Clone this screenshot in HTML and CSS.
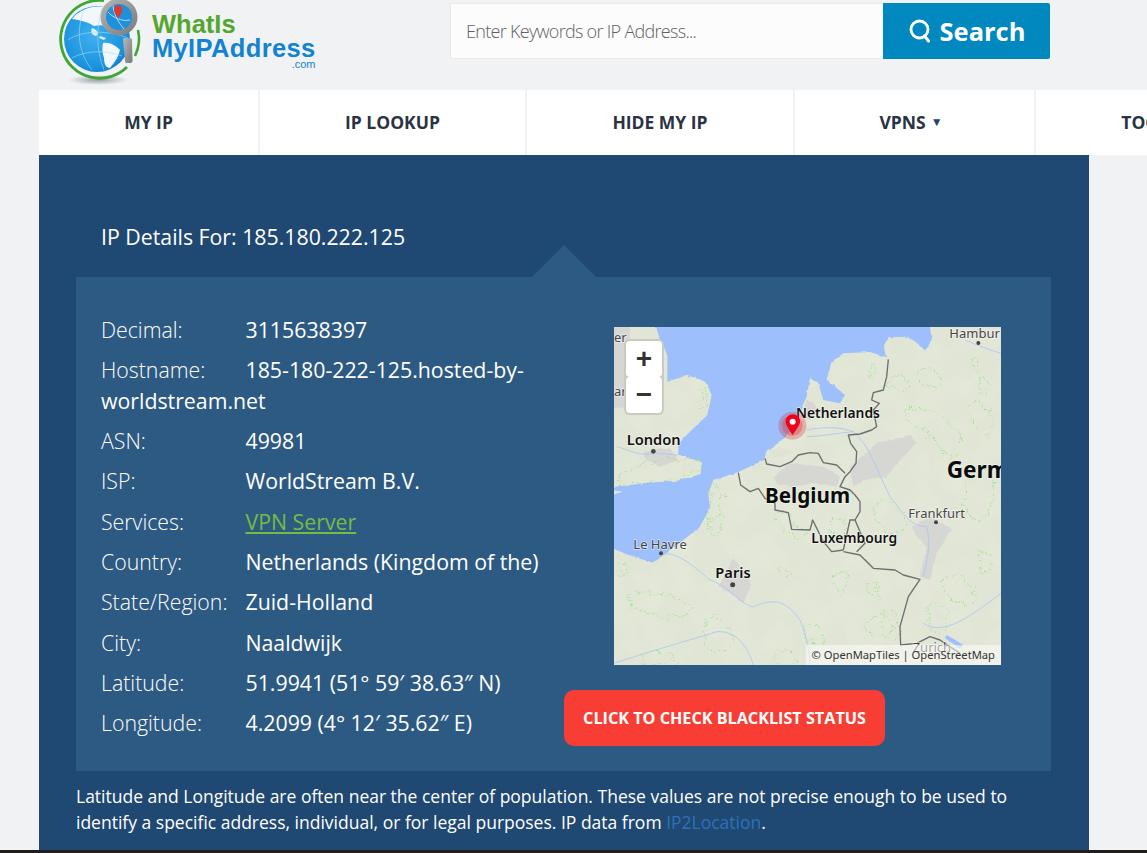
FILE: index.html
```html
<!DOCTYPE html>
<html lang="en">
<head>
    <meta charset="UTF-8">
    <meta name="viewport" content="width=device-width, initial-scale=1.0">
    <title>IP Details</title>
    <link rel="stylesheet" href="styles.css">
</head>
<body>
    <div class="page">
        <!-- Logo and search -->
        <header class="header">
            <a href="#" class="logo">
                <svg class="logo-mark" viewBox="0 0 90 90" width="90" height="90" aria-hidden="true">
                    <defs>
                        <radialGradient id="globe" cx="0.45" cy="0.45" r="0.65">
                            <stop offset="0" stop-color="#3fb0ee"/>
                            <stop offset="0.75" stop-color="#1a92de"/>
                            <stop offset="1" stop-color="#0d70c2"/>
                        </radialGradient>
                        <radialGradient id="shadow">
                            <stop offset="0" stop-color="#80858a" stop-opacity="0.75"/>
                            <stop offset="1" stop-color="#80858a" stop-opacity="0"/>
                        </radialGradient>
                        <linearGradient id="steel" x1="0" y1="0" x2="1" y2="1">
                            <stop offset="0" stop-color="#b5b7b8"/>
                            <stop offset="1" stop-color="#77797b"/>
                        </linearGradient>
                    </defs>
                    <ellipse cx="40" cy="80" rx="30" ry="5" fill="url(#shadow)"/>
                    <path d="M46 0.5 A39 39 0 1 0 69 67" fill="none" stroke="#3fa535" stroke-width="2.8"/>
                    <path d="M80 30 A39 39 0 0 1 77 56" fill="none" stroke="#3fa535" stroke-width="2.6"/>
                    <circle cx="39" cy="39" r="33" fill="url(#globe)"/>
                    <path d="M14 19 C24 6 44 3 56 11 L56 27 C48 26 44 24 36 26 C30 22 22 20 14 19Z" fill="#f1f7fb"/>
                    <path d="M45 43 C52 42 58 46 62 50 C60 58 56 63 52 68 C48 68 46 64 46 58 C44 52 44 48 45 43Z" fill="#f1f7fb"/>
                    <path d="M34 28 C40 30 42 34 38 36 C34 35 32 32 34 28Z M42 36 L48 38 L46 40 L41 38Z" fill="#d8eef9"/>
                    <path d="M10 40 C24 30 50 30 70 38 M14 58 C28 50 50 50 64 56 M26 10 C18 30 20 52 34 70 M44 8 C38 28 38 50 46 70" fill="none" stroke="#a7dcf6" stroke-width="0.6"/>
                    <circle cx="61" cy="17" r="18.5" fill="url(#steel)"/>
                    <circle cx="61" cy="17" r="13" fill="#1f90dc"/>
                    <path d="M50 12 C54 17 64 22 72 20 M55 6 C56 14 60 22 66 29" fill="none" stroke="#d4ecfa" stroke-width="0.8"/>
                    <path d="M60 18.5 C57 13.5 56 11.5 56 9.5 A4.2 4.2 0 0 1 64.4 9.5 C64.4 11.5 63 13.5 60 18.5Z" fill="#dc3a2c"/>
                    <path d="M66 38 L72 38 C73.5 38 74 39 74 40 L74.5 61 C74.5 62.5 73 63 72 63 L69 63 C67.5 63 67 62 67 61 L65 40 C65 39 65 38 66 38Z" fill="url(#steel)"/>
                </svg>
                <span class="logo-text">
                    <span class="logo-green">WhatIs</span>
                    <span class="logo-blue">MyIPAddress</span>
                    <span class="logo-com">.com</span>
                </span>
            </a>
            <form class="search" action="#">
                <input type="text" class="search-input" placeholder="Enter Keywords or IP Address...">
                <button type="button" class="search-button">
                    <svg viewBox="0 0 24 24" width="24" height="24" aria-hidden="true">
                        <circle cx="11.5" cy="10.5" r="8.5" fill="none" stroke="#fff" stroke-width="2.8"/>
                        <path d="M16.5 17 L20.5 22" stroke="#fff" stroke-width="3" stroke-linecap="round"/>
                    </svg>
                    Search
                </button>
            </form>
        </header>

        <!-- Main nav -->
        <nav class="nav">
            <a href="#" class="tab tab-first">MY IP</a>
            <a href="#" class="tab tab-wide">IP LOOKUP</a>
            <a href="#" class="tab">HIDE MY IP</a>
            <a href="#" class="tab tab-short">VPNS <span class="caret">▼</span></a>
            <a href="#" class="tab tab-tools">TOOLS <span class="caret">▼</span></a>
        </nav>

        <!-- IP details -->
        <main class="panel">
            <h2 class="panel-title">IP Details For: 185.180.222.125</h2>
            <section class="details">
                <div class="info">
                    <p><span class="label">Decimal:</span>3115638397</p>
                    <p><span class="label">Hostname:</span>185-180-222-125.hosted-by-worldstream.net</p>
                    <p><span class="label">ASN:</span>49981</p>
                    <p><span class="label">ISP:</span>WorldStream B.V.</p>
                    <p><span class="label">Services:</span><a href="#" class="vpn-link">VPN Server</a></p>
                    <p><span class="label">Country:</span>Netherlands (Kingdom of the)</p>
                    <p><span class="label">State/Region:</span>Zuid-Holland</p>
                    <p><span class="label">City:</span>Naaldwijk</p>
                    <p><span class="label">Latitude:</span>51.9941 (51° 59′ 38.63″ N)</p>
                    <p><span class="label">Longitude:</span>4.2099 (4° 12′ 35.62″ E)</p>
                </div>
                <div class="side">
                    <div class="map">
                        <!-- viewBox is 3x the map's pixel size -->
                        <svg class="map-svg" viewBox="12 21 1161 1014" width="387" height="338" aria-hidden="true">
                            <defs>
                                <filter id="mottle" filterUnits="userSpaceOnUse" x="12" y="21" width="1161" height="1014">
                                    <feTurbulence type="fractalNoise" baseFrequency="0.012" numOctaves="3" seed="4"/>
                                    <feColorMatrix type="matrix" values="0 0 0 0 0.80  0 0 0 0 0.87  0 0 0 0 0.74  1.6 0 0 0 -0.62"/>
                                </filter>
                                <filter id="coast" filterUnits="userSpaceOnUse" x="-40" y="-40" width="1260" height="1120">
                                    <feTurbulence type="fractalNoise" baseFrequency="0.05" numOctaves="2" seed="7"/>
                                    <feDisplacementMap in="SourceGraphic" scale="9" xChannelSelector="R" yChannelSelector="G"/>
                                </filter>
                                <filter id="wiggle" filterUnits="userSpaceOnUse" x="12" y="21" width="1161" height="1014">
                                    <feTurbulence type="fractalNoise" baseFrequency="0.035" numOctaves="3" seed="11"/>
                                    <feDisplacementMap in="SourceGraphic" scale="38" xChannelSelector="R" yChannelSelector="G"/>
                                </filter>
                            </defs>
                            <rect x="12" y="21" width="1161" height="1014" fill="#e1e5d5"/>
                            <rect x="12" y="21" width="1161" height="1014" filter="url(#mottle)" opacity="0.5"/>
                            <!-- sea -->
                            <path class="sea" filter="url(#coast)" d="M135 -20 L960 -20 L960 21 L965 60 L945 92 L925 70 L890 50 L835 52 L822 80 L828 112 L780 96 L700 100 L665 125 L650 180 L705 225 L690 250 L640 240 L625 190 L600 175 L590 230 L565 285 L535 340 L510 365 L470 392 L462 420 L385 456 L310 480 L295 520 L300 565 L268 622 L195 680 L130 728 L70 710 L-20 675 L-20 535 L35 515 L-20 505 L100 490 L200 482 L272 462 L275 425 L205 405 L205 372 L240 335 L292 285 L305 225 L285 185 L232 165 L172 185 L172 110 L155 60 L135 21Z"/>
                            <path class="land" d="M480 392 C510 380 540 385 550 395 L520 410 L478 410Z"/>
                            <!-- urban -->
                            <g filter="url(#coast)">
                                <path class="urban" d="M-20 -20 L60 -20 L60 80 L50 200 L50 260 L-20 270Z"/>
                                <path class="urban" d="M490 470 L540 430 L640 440 L690 470 L680 500 L610 490 L540 500 L500 490Z"/>
                                <path class="urban" d="M720 440 L800 370 L900 345 L920 370 L870 420 L830 470 L760 480 L730 500Z"/>
                                <path class="urban" d="M905 620 L960 590 L1025 625 L1010 650 L980 700 L960 780 L930 770 L950 680 L920 650Z"/>
                                <path class="urban" d="M325 800 L370 715 L425 790 L400 850 L370 825Z"/>
                                <path class="urban" d="M100 395 L180 385 L205 420 L150 440 L110 420Z"/>
                                <path class="urban" d="M590 240 L620 260 L600 300 L575 290Z"/>
                            </g>
                            <!-- forest outlines -->
                            <g class="forest" filter="url(#wiggle)">
                                <path d="M920 150 C960 130 1000 170 995 195 C950 210 920 190 920 150Z"/>
                                <path d="M880 270 C940 240 1020 300 1050 350 C1040 420 1010 430 990 380 C960 330 900 320 880 270Z"/>
                                <path d="M1090 120 C1110 110 1115 150 1090 160Z"/>
                                <path d="M1105 175 C1140 170 1145 205 1110 215Z"/>
                                <path d="M780 130 C800 140 800 180 780 180Z"/>
                                <path d="M830 200 C860 150 880 150 895 210Z"/>
                                <path d="M20 470 C80 420 170 410 270 425 C270 470 180 480 100 490 C70 500 30 500 20 470Z"/>
                                <path d="M272 200 C300 200 305 250 280 270Z"/>
                                <path d="M300 490 C340 490 350 560 320 590 C300 620 285 600 300 560Z"/>
                                <path d="M490 570 C540 570 550 620 600 640 C570 670 510 640 490 570Z"/>
                                <path d="M660 600 C700 580 720 620 700 660 C670 660 650 630 660 600Z"/>
                                <path d="M50 820 C110 810 240 830 250 870 C220 900 130 900 60 850Z"/>
                                <path d="M500 740 C530 730 550 750 530 770 C510 770 500 760 500 740Z"/>
                                <path d="M670 760 C720 740 730 790 690 820 C670 810 670 790 670 760Z"/>
                                <path d="M770 790 C800 780 820 810 800 840 C780 830 770 810 770 790Z"/>
                                <path d="M760 920 C790 870 830 880 850 920 C830 970 790 960 760 920Z"/>
                                <path d="M580 920 C620 900 650 930 640 980 C600 980 580 950 580 920Z"/>
                                <path d="M290 890 C340 880 350 900 360 940 C400 970 330 1020 280 980Z"/>
                                <path d="M1000 780 C1060 740 1100 790 1090 850 C1040 860 990 830 1000 780Z"/>
                                <path d="M960 850 C1000 840 1040 900 1000 940 C960 930 940 900 960 850Z"/>
                                <path d="M1060 520 C1090 420 1150 420 1160 500 C1140 620 1070 640 1060 520Z"/>
                                <path d="M790 560 C830 520 880 560 890 610 C860 660 790 640 790 560Z"/>
                                <path d="M1100 700 C1150 680 1160 740 1120 760Z"/>
                                <path d="M100 1000 C150 980 200 1010 210 1035 L100 1035Z"/>
                                <path d="M500 990 C530 980 560 1000 560 1035 L500 1035Z"/>
                                <path d="M30 730 C50 720 60 750 30 770Z"/>
                                <path d="M1080 250 C1120 240 1160 280 1150 340 C1110 350 1070 300 1080 250Z"/>
                                <path d="M820 880 C860 860 880 900 860 960 C830 960 810 920 820 880Z"/>
                                <path d="M300 590 C340 580 350 620 320 640 C300 640 290 620 300 590Z"/>
                            </g>
                            <!-- rivers -->
                            <g class="river">
                                <path d="M590 330 C640 320 690 320 730 335 C780 380 790 430 840 530 C880 580 900 620 950 620 C965 680 950 720 940 770"/>
                                <path d="M590 350 C620 350 680 340 730 335"/>
                                <path d="M20 380 C60 390 90 410 130 400 C160 400 190 405 205 405"/>
                                <path d="M150 700 C210 700 240 730 300 780 C360 800 400 860 430 860 C480 840 520 830 570 900 C590 950 600 1000 600 1035"/>
                                <path d="M12 1030 C100 1000 240 960 320 935 C390 930 420 1000 430 1035"/>
                                <path d="M1065 60 C1100 75 1140 90 1173 100"/>
                                <path d="M940 910 C1000 950 1080 890 1173 820"/>
                            </g>
                            <path class="lake" d="M1010 945 L1060 975 L1050 985 L1005 955Z"/>
                            <!-- borders -->
                            <g class="border">
                                <path d="M835 118 L830 170 L820 210 L790 218 L785 240 L808 250 L790 270 L800 320 L785 330 L750 342 L715 345 L722 370 L740 395 L738 430 L720 455 L705 470 L690 500 L720 510 L735 525 L750 545 L750 575 L735 600 L720 600 L700 690"/>
                                <path d="M465 415 L470 432 L510 440 L545 425 L565 405 L600 398 L625 400 L640 428 L680 435 L705 460"/>
                                <path d="M385 458 L392 495 L420 515 L445 505 L465 535 L495 550 L495 570 L535 578 L545 628 L600 630 L608 600 L640 665 L665 695 L700 690"/>
                                <path d="M735 600 L765 670 L740 695"/>
                                <path d="M700 695 L750 705 L790 745 L855 750 L880 765 L930 778 L895 830 L870 920 L872 975"/>
                                <path d="M870 975 L920 970 L960 950 L990 960 L1050 1000"/>
                            </g>
                            <!-- city dots -->
                            <g class="dot">
                                <circle cx="130" cy="394" r="7"/>
                                <circle cx="153" cy="700" r="6"/>
                                <circle cx="368" cy="794" r="7.5"/>
                                <circle cx="978" cy="607" r="6"/>
                                <circle cx="1105" cy="69" r="6"/>
                            </g>
                            <!-- labels -->
                            <text class="city" x="1018" y="55">Hambur</text>
                            <text class="city" x="12" y="67">er</text>
                            <text class="city" x="12" y="227">ar</text>
                            <text class="place" x="558" y="294">Netherlands</text>
                            <text class="place place-lg" x="50" y="375">London</text>
                            <text class="country" x="1010" y="474">Germ</text>
                            <text class="country country-be" x="465" y="549">Belgium</text>
                            <text class="city" x="895" y="593">Frankfurt</text>
                            <text class="place" x="604" y="668">Luxembourg</text>
                            <text class="city" x="70" y="686">Le Havre</text>
                            <text class="place place-lg" x="316" y="774">Paris</text>
                            <text class="city" x="908" y="995">Zurich</text>
                            <!-- marker -->
                            <circle cx="547" cy="317" r="42" fill="#d8282e" opacity="0.28"/>
                            <circle cx="547" cy="317" r="31" fill="#d8282e" opacity="0.3"/>
                            <path d="M548 345 C532 322 527 314 527 304 A21 21 0 0 1 570 304 C570 314 564 322 548 345Z" fill="#f0001a"/>
                            <circle cx="548" cy="305" r="9" fill="#fff"/>
                        </svg>
                        <div class="zoom">
                            <span class="zoom-btn">+</span>
                            <span class="zoom-btn">−</span>
                        </div>
                        <div class="attribution">© OpenMapTiles | OpenStreetMap</div>
                    </div>
                    <a href="#" class="blacklist">CLICK TO CHECK BLACKLIST STATUS</a>
                </div>
            </section>
            <p class="note">Latitude and Longitude are often near the center of population. These values are not precise enough to be used to identify a specific address, individual, or for legal purposes. IP data from <a href="#">IP2Location</a>.</p>
        </main>
        <div class="footer-strip"></div>
    </div>
</body>
</html>
```

FILE: styles.css
```css
/* Basic page */
html, body {
    height: 100%;
}

body {
    font-family: "Open Sans", sans-serif;
    background-color: #f1f2f4;
    color: #fff;
    margin: 0;
    overflow: hidden;
}

.page {
    width: 1147px;
    overflow: hidden;
}

/* Header */
.header {
    display: flex;
    height: 90px;
}

.logo {
    display: flex;
    width: 392px;
    margin-left: 58px;
    text-decoration: none;
}

.logo-mark {
    flex: none;
}

.logo-text {
    display: flex;
    flex-direction: column;
    margin-left: 4px;
    padding-top: 12px;
    font-family: "Liberation Sans", Arial, sans-serif;
    font-weight: 700;
}

.logo-green {
    color: #55a630;
    font-size: 25.5px;
    line-height: 24px;
}

.logo-blue {
    color: #1283d0;
    font-size: 25.5px;
    letter-spacing: 0.35px;
    line-height: 24px;
}

.logo-com {
    align-self: flex-end;
    color: #1283d0;
    font-size: 11px;
    font-weight: 400;
    line-height: 9px;
}

.search {
    display: flex;
    align-items: flex-start;
    margin-top: 3px;
}

.search-input {
    box-sizing: border-box;
    width: 433px;
    height: 56px;
    padding: 0 15px;
    border: 1px solid #e9eaec;
    border-right: none;
    background-color: #fcfcfc;
    font-family: "Open Sans", sans-serif;
    font-size: 18px;
    font-weight: 300;
    letter-spacing: -0.7px;
    outline: none;
}

.search-input::placeholder {
    color: #5f6164;
    opacity: 1;
}

.search-button {
    display: flex;
    align-items: center;
    justify-content: center;
    gap: 8px;
    width: 167px;
    height: 56px;
    padding: 0;
    border: none;
    border-radius: 0 2px 2px 0;
    background-color: #0088bf;
    color: #fff;
    font-family: "Open Sans", sans-serif;
    font-size: 25.5px;
    font-weight: 700;
}

/* Nav */
.nav {
    display: flex;
    gap: 2px;
    height: 65px;
    margin-left: 39px;
}

.tab {
    flex: none;
    display: flex;
    align-items: center;
    justify-content: center;
    box-sizing: border-box;
    width: 266px;
    padding-bottom: 2px;
    background-color: #fff;
    color: #2a3342;
    font-size: 17.5px;
    font-weight: 700;
    text-decoration: none;
}

.tab-first {
    width: 219px;
}

.tab-wide {
    width: 265px;
}

.tab-short {
    width: 239px;
}

.tab-tools {
    width: 252px;
}

.caret {
    margin-left: 5px;
    margin-right: 7px;
    font-size: 12px;
    color: #1f4872;
}

/* IP details panel */
.panel {
    width: 1050px;
    height: 695px;
    margin-left: 39px;
    box-sizing: border-box;
    padding: 0 38px 0 37px;
    background-color: #1f4872;
}

.panel-title {
    margin: 0;
    padding: 66px 0 25px 25px;
    font-size: 21.3px;
    font-weight: 400;
    line-height: 31px;
}

.details {
    position: relative;
    display: flex;
    height: 494px;
    box-sizing: border-box;
    padding: 38px 0 0 25px;
    background-color: #2d5a82;
}

/* little arrow on top of the box */
.details::before {
    content: "";
    position: absolute;
    top: -32px;
    left: 456px;
    border-left: 32px solid transparent;
    border-right: 32px solid transparent;
    border-bottom: 32px solid #2d5a82;
}

.info {
    flex: none;
    width: 463px;
}

.info p {
    margin: 0 0 10px;
    font-size: 21.3px;
    line-height: 30.35px;
}

.label {
    display: inline-block;
    width: 144.5px;
    font-weight: 300;
}

.vpn-link {
    color: #76bc43;
}

.side {
    display: flex;
    flex-direction: column;
    align-items: flex-start;
    padding-top: 12px;
}

/* Map */
.map {
    position: relative;
    width: 387px;
    height: 338px;
    margin-left: 50px;
    overflow: hidden;
}

.map-svg {
    display: block;
}

.sea {
    fill: #9dbffc;
}

.land {
    fill: #dfe3d3;
}

.urban {
    fill: #d6d6d3;
}

.forest path {
    fill: none;
    stroke: #93e385;
    stroke-width: 3.5;
    stroke-dasharray: 3 6;
}

.river path {
    fill: none;
    stroke: #a9c8f5;
    stroke-width: 2.5;
}

.lake {
    fill: #9dbffc;
}

.border path {
    fill: none;
    stroke: #6b6e6e;
    stroke-width: 4;
    stroke-linejoin: round;
}

.dot circle {
    fill: #444;
}

.map-svg text {
    font-family: "Noto Sans", "Open Sans", sans-serif;
    paint-order: stroke;
    stroke: rgba(255, 255, 255, 0.6);
    stroke-width: 4;
}

.city {
    fill: #444;
    font-size: 39px;
}

.place {
    fill: #111;
    font-size: 41.5px;
    font-weight: 600;
}

.place-lg {
    font-size: 44px;
}

.country {
    fill: #0c0c0c;
    font-size: 68px;
    font-weight: 700;
}

.country-be {
    font-size: 62px;
}

.zoom {
    position: absolute;
    top: 12px;
    left: 10px;
    display: flex;
    flex-direction: column;
    padding: 2px;
    border-radius: 6px;
    background-color: #c9cbbf;
}

.zoom-btn {
    display: flex;
    align-items: center;
    justify-content: center;
    width: 36px;
    height: 36px;
    border-radius: 4px;
    background-color: #fff;
    color: #333;
    font-family: "Liberation Sans", Arial, sans-serif;
    font-size: 28px;
    font-weight: 700;
}

.attribution {
    position: absolute;
    right: 0;
    bottom: 0;
    padding: 0 6px;
    background-color: rgba(255, 255, 255, 0.5);
    color: #333;
    font-family: "Noto Sans", sans-serif;
    font-size: 11.2px;
    line-height: 20px;
}

.blacklist {
    display: flex;
    align-items: center;
    justify-content: center;
    width: 321px;
    height: 56px;
    margin-top: 25px;
    border-radius: 10px;
    background-color: #f83e34;
    color: #fff;
    font-size: 16.2px;
    font-weight: 700;
    text-decoration: none;
}

.note {
    margin: 12px 0 0;
    font-size: 17.5px;
    line-height: 26px;
}

.note a {
    color: #2d72b8;
    text-decoration: none;
}

.footer-strip {
    height: 10px;
    background-color: #221d1c;
}
```
